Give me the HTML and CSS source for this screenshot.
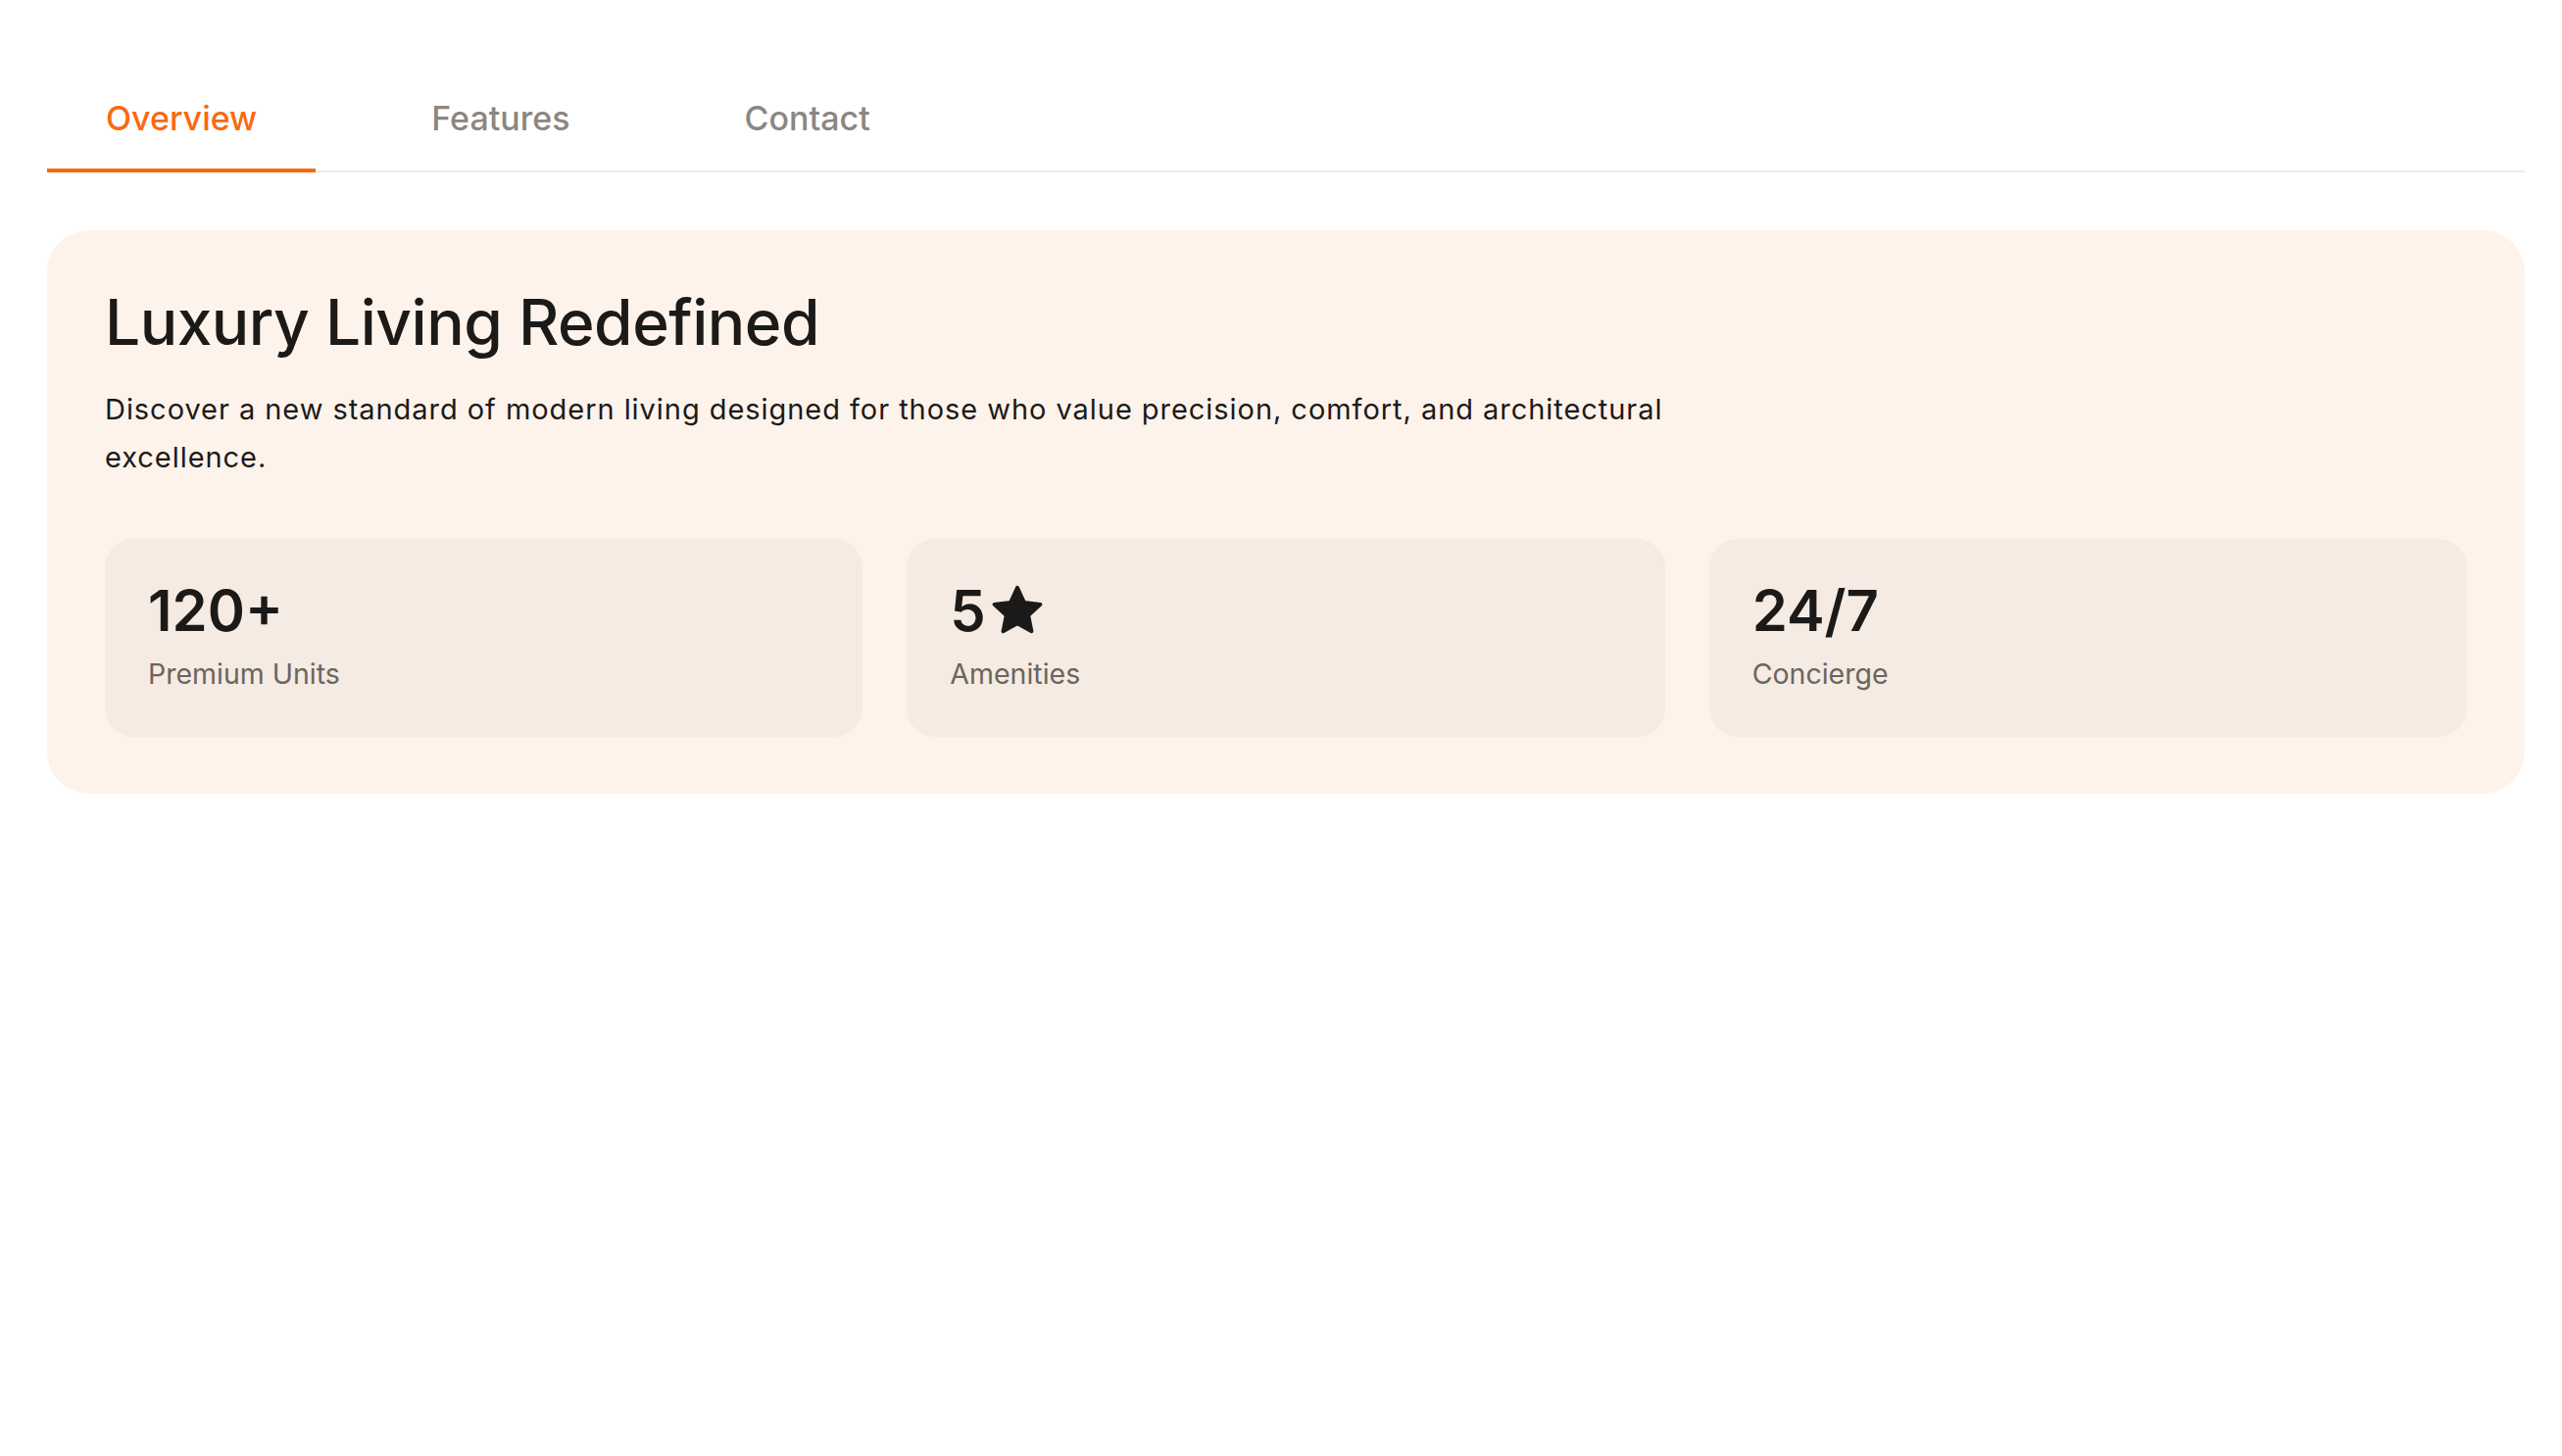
FILE: index.html
```html
<!DOCTYPE html>
<html lang="en">
<head>
  <meta charset="UTF-8">
  <meta name="viewport" content="width=device-width, initial-scale=1.0">
  <title>Luxury Living Redefined</title>
  <link rel="stylesheet" href="styles.css">
</head>
<body>
  <div class="page">
    <nav class="tabs">
      <a class="tab tab-active" href="#overview">Overview</a>
      <a class="tab" href="#features">Features</a>
      <a class="tab" href="#contact">Contact</a>
    </nav>

    <section class="panel" id="overview">
      <h1 class="panel-title">Luxury Living Redefined</h1>
      <p class="panel-text">Discover a new standard of modern living designed for those who value precision, comfort, and architectural excellence.</p>

      <div class="stats">
        <div class="stat">
          <div class="stat-value">120+</div>
          <div class="stat-label">Premium Units</div>
        </div>
        <div class="stat">
          <div class="stat-value">5
            <svg class="star" viewBox="0 0 24 24" aria-hidden="true">
              <polygon points="12,2.4 14.88,8.64 21.7,9.45 16.66,14.11 18,20.85 12,17.5 6,20.85 7.34,14.11 2.3,9.45 9.12,8.64"/>
            </svg>
          </div>
          <div class="stat-label">Amenities</div>
        </div>
        <div class="stat">
          <div class="stat-value">24/7</div>
          <div class="stat-label">Concierge</div>
        </div>
      </div>
    </section>
  </div>
</body>
</html>
```

FILE: styles.css
```css
html, body {
  margin: 0;
  padding: 0;
  background: #fff;
  font-family: 'Inter', 'Noto Sans', sans-serif;
  color: #1c1a19;
}
.page {
  padding: 70px 38px 0 48px;
}

/* tabs */
.tabs {
  display: flex;
  gap: 58px;
  border-bottom: 2px solid #f4eae2;
}
.tab {
  display: block;
  padding: 25px 60px;
  margin-bottom: -2px;
  font-size: 34px;
  line-height: 52px;
  font-weight: 500;
  color: #8c8681;
  text-decoration: none;
  border-bottom: 4px solid transparent;
}
.tab-active {
  color: #f86a10;
  border-bottom-color: #f86a10;
}

/* overview panel */
.panel {
  margin-top: 59px;
  padding: 59px 59px 58px;
  background: #fdf3eb;
  border-radius: 43px;
}
.panel-title {
  margin: 0 0 29px;
  font-size: 64px;
  line-height: 1.1;
  font-weight: 500;
  letter-spacing: -0.5px;
}
.panel-text {
  margin: 0;
  max-width: 1640px;
  font-size: 29px;
  line-height: 49px;
  letter-spacing: 0.95px;
}

.stats {
  display: grid;
  grid-template-columns: repeat(3, 1fr);
  gap: 45px;
  margin-top: 59px;
}
.stat {
  background: #f5ebe2;
  border-radius: 29px;
  padding: 44px 44px 42px;
}
.stat-value {
  display: flex;
  align-items: center;
  gap: 3px;
  font-size: 58px;
  line-height: 58px;
  font-weight: 600;
}
.star {
  width: 58px;
  height: 58px;
  fill: #1c1a19;
  stroke: #1c1a19;
  stroke-width: 1.6;
  stroke-linejoin: round;
}
.stat-label {
  margin-top: 15px;
  font-size: 28.5px;
  line-height: 1.5;
  color: #6b6560;
}
```
